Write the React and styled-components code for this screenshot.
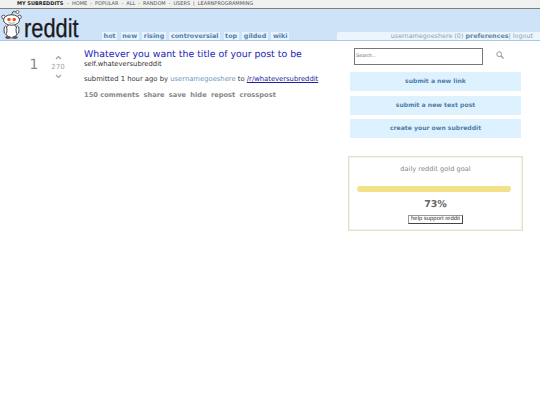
import React from "react";
import styled, { createGlobalStyle } from "styled-components";

const Global = createGlobalStyle`
  html, body { margin: 0; padding: 0; background: #fff; }
  body { font-family: "DejaVu Sans", Verdana, sans-serif; text-rendering: geometricPrecision; }
`;

const Page = styled.div`
  width: 540px;
  height: 405px;
  overflow: hidden;
  background: #fff;
`;
const TopBar = styled.div`
  height: 8px;
  background: #f0f0f0;
  border-bottom: 1px solid #808080;
  padding-left: 17px;
  display: flex;
  align-items: center;
  gap: 3px;
  font-size: 5px;
  line-height: 8px;
  color: #555;
  white-space: nowrap;
`;
const TopStrong = styled.span`
  font-weight: bold;
  color: #222;
  margin-right: 1px;
`;
const Header = styled.header`
  height: 31px;
  background: #cee3f8;
  border-bottom: 1px solid #a9c6e2;
  display: flex;
  align-items: flex-end;
  position: relative;
`;
const Logo = styled.div`
  width: 102px;
  height: 31px;
  flex: none;
  display: flex;
  align-items: flex-end;
`;
const Wordmark = styled.span`
  font-family: "Liberation Sans", Arial, sans-serif;
  font-size: 26px;
  line-height: 26px;
  color: #1a1a1a;
  -webkit-text-stroke: 0.3px #1a1a1a;
  transform: scaleX(0.84);
  transform-origin: left bottom;
  margin-bottom: -1px;
`;
const Tabs = styled.nav`
  display: flex;
  gap: 3.5px;
  height: 8px;
`;
const Tab = styled.span`
  background: #eff7ff;
  color: #369;
  opacity: 0.8;
  font-size: 6.4px;
  font-weight: bold;
  line-height: 8px;
  padding: 0 1.6px;
  white-space: nowrap;
`;
const UserBox = styled.div`
  position: absolute;
  right: 0;
  bottom: 0;
  width: 203px;
  height: 8px;
  box-sizing: border-box;
  background: #ecf4fc;
  border-radius: 2px 0 0 0;
  padding-right: 7px;
  font-size: 6.4px;
  line-height: 8px;
  color: #8aa4bd;
  display: flex;
  justify-content: flex-end;
  white-space: pre;
`;
const Pref = styled.span`
  font-weight: bold;
  color: #5c84a8;
`;
const Main = styled.main`
  display: flex;
  align-items: flex-start;
`;
const Post = styled.article`
  width: 348px;
  flex: none;
  display: flex;
  padding-top: 9px;
`;
const Rank = styled.div`
  width: 48px;
  box-sizing: border-box;
  margin-top: 6px;
  text-align: center;
  font-size: 14px;
  line-height: 18px;
  color: #888;
  flex: none;
  padding-left: 26px;
  padding-right: 6px;
`;
const Votes = styled.div`
  width: 20px;
  margin-right: 16px;
  flex: none;
  display: flex;
  flex-direction: column;
  align-items: center;
  padding-top: 5px;
  color: #999;
`;
const Score = styled.div`
  font-size: 7px;
  line-height: 9px;
  margin: 3px 0 2px;
  color: #a3a3a3;
`;
const Body = styled.div`
  flex: 1;
  min-width: 0;
  white-space: nowrap;
`;
const Title = styled.div`
  font-size: 9.4px;
  line-height: 10px;
  color: #1c1cb4;
`;
const Domain = styled.div`
  font-size: 6.8px;
  line-height: 8px;
  color: #333;
`;
const Tagline = styled.div`
  font-size: 6.8px;
  line-height: 10px;
  color: #333;
  margin-top: 6px;
`;
const Author = styled.span`
  color: #6a98bd;
`;
const SubLink = styled.span`
  color: #22229e;
  text-decoration: underline;
`;
const Actions = styled.div`
  display: flex;
  gap: 4.2px;
  font-size: 6.7px;
  font-weight: bold;
  line-height: 10px;
  color: #888;
  margin-top: 6px;
`;
const Side = styled.aside`
  width: 175px;
  flex: none;
  padding-top: 7px;
`;
const SearchRow = styled.div`
  display: flex;
  align-items: center;
  padding-left: 6px;
`;
const SearchBox = styled.div`
  width: 129px;
  height: 17px;
  box-sizing: border-box;
  border: 1px solid #777;
  font-size: 5px;
  line-height: 15px;
  color: #777;
  padding-left: 1px;
  font-family: "Liberation Sans", Arial, sans-serif;
`;
const SearchIcon = styled.svg`
  width: 8px;
  height: 8px;
  margin-left: 13px;
  margin-top: -3px;
`;
const Buttons = styled.div`
  display: flex;
  flex-direction: column;
  gap: 4.5px;
  margin: 7px 0 0 2px;
  width: 171px;
`;
const SideButton = styled.div`
  height: 19px;
  background: #def1fe;
  color: #4b7ea8;
  font-size: 6.1px;
  font-weight: bold;
  line-height: 20px;
  text-align: center;
`;
const Gold = styled.section`
  width: 175px;
  height: 75px;
  box-sizing: border-box;
  margin-top: 18px;
  border: 1px solid #e3dfc9;
  box-shadow: inset 0 0 0 0.5px #ece8d6;
  display: flex;
  flex-direction: column;
  align-items: center;
  padding-top: 7px;
`;
const GoldLabel = styled.div`
  font-size: 6.65px;
  line-height: 10px;
  color: #888;
`;
const Bar = styled.div`
  width: 154px;
  height: 6px;
  border-radius: 3px;
  background: #f3e189;
  margin: 12px 3px 0 0;
`;
const Percent = styled.div`
  font-size: 9.5px;
  font-weight: bold;
  line-height: 12px;
  color: #666;
  margin-top: 7px;
`;
const Support = styled.div`
  width: 55px;
  height: 9px;
  box-sizing: border-box;
  margin-top: 4px;
  border: 1px solid #555;
  border-color: #999 #444 #444 #999;
  font-family: "Liberation Sans", Arial, sans-serif;
  font-size: 5.9px;
  line-height: 7px;
  color: #333;
  text-align: center;
  white-space: nowrap;
`;

const Chevron = ({ up }) => (
  <svg width="7" height="5" viewBox="0 0 7 5" aria-hidden="true">
    <path
      d={up ? "M1 4 L3.5 1.5 L6 4" : "M1 1 L3.5 3.5 L6 1"}
      fill="none"
      stroke="#a0a0a0"
      strokeWidth="1.2"
    />
  </svg>
);

const Snoo = () => (
  <svg width="24" height="31" viewBox="0 0 24 31" aria-hidden="true">
    <path d="M11.5 6 L13 2.5 L16 3" fill="none" stroke="#333" strokeWidth="0.8" />
    <circle cx="17.5" cy="3" r="1.5" fill="#fff" stroke="#444" strokeWidth="0.7" />
    <circle cx="3.5" cy="8" r="1.8" fill="#fff" stroke="#333" strokeWidth="0.8" />
    <circle cx="19.5" cy="8" r="1.8" fill="#fff" stroke="#333" strokeWidth="0.8" />
    <ellipse cx="11.5" cy="22" rx="6" ry="7" fill="#fff" stroke="#333" strokeWidth="0.9" />
    <ellipse cx="5.5" cy="21" rx="1.5" ry="4" fill="#fff" stroke="#333" strokeWidth="0.9" />
    <ellipse cx="17.5" cy="21" rx="1.5" ry="4" fill="#fff" stroke="#333" strokeWidth="0.9" />
    <ellipse cx="8" cy="28.5" rx="2.8" ry="1.4" fill="#555" />
    <ellipse cx="15" cy="28.5" rx="2.8" ry="1.4" fill="#555" />
    <ellipse cx="11.5" cy="11" rx="8" ry="5.2" fill="#fff" stroke="#333" strokeWidth="0.9" />
    <circle cx="9" cy="10.5" r="1.7" fill="#f0501e" />
    <circle cx="14.2" cy="10.5" r="1.7" fill="#f0501e" />
    <path d="M8.5 13.6 Q11.5 15 14.8 13.6" fill="none" stroke="#666" strokeWidth="0.6" />
  </svg>
);

const tabs = ["hot", "new", "rising", "controversial", "top", "gilded", "wiki"];
const topLinks = ["HOME", "-", "POPULAR", "-", "ALL", "-", "RANDOM", "-", "USERS", "|", "LEARNPROGRAMMING"];
const actions = ["150 comments", "share", "save", "hide", "repost", "crosspost"];
const sideButtons = ["submit a new link", "submit a new text post", "create your own subreddit"];

export default function App() {
  return (
    <Page>
      <Global />
      <TopBar>
        <TopStrong>MY SUBREDDITS</TopStrong>
        <span>-</span>
        {topLinks.map((t, i) => (
          <span key={i}>{t}</span>
        ))}
      </TopBar>
      <Header>
        <Logo>
          <Snoo />
          <Wordmark>reddit</Wordmark>
        </Logo>
        <Tabs>
          {tabs.map((t) => (
            <Tab key={t}>{t}</Tab>
          ))}
        </Tabs>
        <UserBox>
          <span>usernamegoeshere (0) </span>
          <Pref>preferences</Pref>
          <span>| logout</span>
        </UserBox>
      </Header>
      <Main>
        <Post>
          <Rank>1</Rank>
          <Votes>
            <Chevron up />
            <Score>270</Score>
            <Chevron />
          </Votes>
          <Body>
            <Title>Whatever you want the title of your post to be</Title>
            <Domain>self.whateversubreddit</Domain>
            <Tagline>
              submitted 1 hour ago by <Author>usernamegoeshere</Author> to{" "}
              <SubLink>/r/whateversubreddit</SubLink>
            </Tagline>
            <Actions>
              {actions.map((a) => (
                <span key={a}>{a}</span>
              ))}
            </Actions>
          </Body>
        </Post>
        <Side>
          <SearchRow>
            <SearchBox>Search...</SearchBox>
            <SearchIcon viewBox="0 0 8 8" aria-hidden="true">
              <circle cx="3.2" cy="3.2" r="2.4" fill="none" stroke="#999" strokeWidth="1" />
              <path d="M5 5 L7.5 7.5" stroke="#999" strokeWidth="1.2" />
            </SearchIcon>
          </SearchRow>
          <Buttons>
            {sideButtons.map((b) => (
              <SideButton key={b}>{b}</SideButton>
            ))}
          </Buttons>
          <Gold>
            <GoldLabel>daily reddit gold goal</GoldLabel>
            <Bar />
            <Percent>73%</Percent>
            <Support>help support reddit</Support>
          </Gold>
        </Side>
      </Main>
    </Page>
  );
}
